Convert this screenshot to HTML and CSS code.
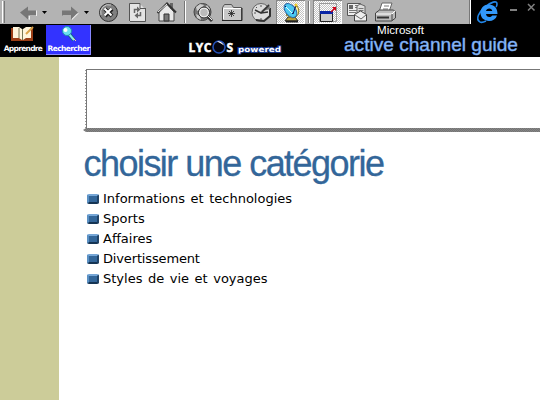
FILE: index.html
```html
<!DOCTYPE html>
<html lang="fr">
<head>
<meta charset="utf-8">
<title>Active Channel Guide</title>
<link rel="stylesheet" href="styles.css">
</head>
<body>
<header class="top">
<div class="chrome">
<div class="toolbar">
<svg width="14" height="24" viewBox="0 0 14 24"><path d="M2.500 1v22" stroke="#fff"/><path d="M4.500 1v22" stroke="#777"/></svg>
<svg width="26" height="24" viewBox="14 0 26 24"><path d="M21 14l8 5v-4h7v-5l1 1v5h-7v4z" fill="#eee"/><path d="M20 12.500l8-6v4h8v5h-8v4z" fill="#777"/></svg>
<svg width="16" height="24" viewBox="40 0 16 24"><path d="M42 11h5l-2.500 3z"/></svg>
<svg width="26" height="24" viewBox="56 0 26 24"><path d="M79 13l-7 7v-4h-9v-1h9z" fill="#eee"/><path d="M78 12.500l-7-6v4h-9v5h9v4z" fill="#777"/></svg>
<svg width="12" height="24" viewBox="82 0 12 24"><path d="M84 11h5l-2.500 3z"/></svg>
<svg width="30" height="24" viewBox="94 0 30 24"><circle cx="108.500" cy="12.500" r="9" fill="#808080" stroke="#333"/><path d="M101 15a8 8 0 0 1 10-10" fill="none" stroke="#ccc"/><path d="M105 9l7 7m0-7l-7 7" stroke="#222" stroke-width="4"/><path d="M104.500 8.500l7 7m0-7l-7 7" stroke="#fff" stroke-width="2"/></svg>
<svg width="28" height="24" viewBox="124 0 28 24"><path d="M130 4h10l5 5v12h-15z" fill="#e4e4e4"/><path d="M129.500 21V3.500H140M140 3.500v5h5M145.500 8v13.500H130" fill="none" stroke="#555"/><path d="M134.500 13V9.500H137M140.500 12v3.500H138" fill="none" stroke="#666" stroke-width="1.500"/><path d="M137 6.500l3.500 3-3.500 3zM138 12.500l-3.500 3 3.500 3z" fill="#666"/></svg>
<svg width="29" height="24" viewBox="152 0 29 24"><path d="M159 12v9h15v-9l-7-8z" fill="#e8e8e8" stroke="#444"/><path d="M170 3h3v6h-3z" fill="#666"/><path d="M157.500 13L167 3.500l9 9" fill="none" stroke="#333" stroke-width="2"/><path d="M158 12l9-8" stroke="#eee"/><path d="M164 14h5v7h-5z" fill="#777" stroke="#333"/></svg>
<svg width="8" height="24" viewBox="181 0 8 24"><path d="M184.500 1v22" stroke="#777"/><path d="M185.500 1v22" stroke="#fff"/></svg>
<svg width="29" height="24" viewBox="189 0 29 24"><circle cx="202.500" cy="12" r="8.500" fill="#777" stroke="#444"/><path d="M196 7l4-3 4 1-3 4-4 2zM207 5l3 4-2 2-3-3zM196 14l4 2 1 4-4-2z" fill="#ccc"/><circle cx="204" cy="12.500" r="4.500" fill="#bbb" stroke="#eee" stroke-width="1.500"/><circle cx="204" cy="12.500" r="5.500" fill="none" stroke="#333"/><path d="M208 17l4 4" stroke="#333" stroke-width="3"/><path d="M208 16l4 4" stroke="#eee"/></svg>
<svg width="29" height="24" viewBox="218 0 29 24"><path d="M222.500 20.500V7.500l2-3h7l2 3h8v13z" fill="#c8c8c8" stroke="#555"/><path d="M223.500 19V8.500H241" fill="none" stroke="#fff"/><path d="M222 20.500h20V8" fill="none" stroke="#222"/><path d="M231.500 10v7m-2.500-6l5 5m0-5l-5 5m-1-2.500h7" stroke="#222" stroke-width=".8"/></svg>
<svg width="29" height="24" viewBox="247 0 29 24"><circle cx="261" cy="12.500" r="9" fill="#ddd" stroke="#666"/><path d="M270 8v8l-6 5-8-1" fill="none" stroke="#333" stroke-width="2"/><path d="M260 12l9-8 1 5z" fill="#777"/><path d="M255 10l6 3 8-8M261 13l7-1" fill="none" stroke="#333" stroke-width="1.500"/><path d="M261 5v2m-7 6h2m5 5v2m-5-13l1 1" stroke="#555"/></svg>
<span class="pressed"><svg width="29" height="24" viewBox="276 0 29 24"><path d="M288 17l-3 4h13l-3-4z" fill="#bba23a" stroke="#333"/><path d="M297 6c4 5 1 12-5 12l-6-3z" fill="#fff0a0" stroke="#8b7818"/><ellipse cx="290.500" cy="10.500" rx="5" ry="8" transform="rotate(-40 290.500 10.500)" fill="#4bc9f2" stroke="#2464a8"/><path d="M285 6l8 8 3-9" fill="none" stroke="#115"/><path d="M286 7l6 6" stroke="#dff"/><circle cx="296" cy="5" r="1.500" fill="#f0ca28"/><path d="M286 21.500h12" stroke="#222" stroke-width="2"/></svg></span>
<svg width="8" height="24" viewBox="305 0 8 24"><path d="M308.500 1v22" stroke="#777"/><path d="M309.500 1v22" stroke="#fff"/></svg>
<span class="pressed"><svg width="29" height="24" viewBox="313 0 29 24"><path d="M319.500 3.500h17v18h-17z" fill="none" stroke="#999"/><path d="M320.500 11.500h12v10h-12z" fill="#ccc" stroke="#222"/><path d="M320 11h13v3h-13z" fill="#0824a5"/><path d="M331 12l4-4" stroke="#d00016" stroke-width="1.500"/><path d="M332 7h4v4z" fill="#d00016"/></svg></span>
<svg width="29" height="24" viewBox="342 0 29 24"><path d="M347.500 3.500h13v12h-13z" fill="#eee" stroke="#555"/><path d="M349 5h4v4h-4z" fill="#666"/><path d="M355 5.500h4m-4 2h4m-10 3h10m-10 2h7" stroke="#777"/><path d="M360 4l5 2v10h-8V6z" fill="#ddd" stroke="#666"/><path d="M358.500 8.500h5m-5 2h5" stroke="#777"/><path d="M354.500 14.500l6-3.500 6 3.500v6.500h-12z" fill="#eee" stroke="#444"/><path d="M355 15l6 4 5-4" fill="none" stroke="#666"/></svg>
<svg width="29" height="24" viewBox="371 0 29 24"><path d="M379 12l3-9h10l-3 9z" fill="#fff" stroke="#666"/><path d="M384 6h5m-6 3h5" stroke="#777"/><path d="M375.500 13l4-3h14l2 2v6l-4 3h-16z" fill="#bbb" stroke="#444"/><path d="M376 14h16l3-3" fill="none" stroke="#fff"/><path d="M377 17.500h12" stroke="#333" stroke-width="2"/><path d="M392 14v7" stroke="#444"/></svg>
</div>
<svg width="69" height="24" viewBox="471 0 69 24"><path d="M480 22c-5-3-1-10 5-15 6-5 12-7 12-3 0 1 0 2-1 3" fill="none" stroke="#2286e8" stroke-width="1.600"/><path d="M480 22c2 1 4 0 6-1" fill="none" stroke="#2286e8" stroke-width="1.600"/><path fill-rule="evenodd" d="M489 4.500c5 0 8.500 3.500 8.500 9.500H486c.2 2 1.500 3 3.300 3 1.500 0 2.500-.6 3-1.500h4.700c-1.200 3.600-4 5.500-8 5.500-5 0-8.500-3.400-8.500-8.200s3.500-8.300 8.500-8.300zM486 11h6.300c-.3-1.600-1.400-2.500-3.100-2.500s-2.800.9-3.200 2.500z" fill="#3298fa"/><path d="M510 10h7" stroke="#808080" stroke-width="2"/><path d="M528 4l6.500 6.500m0-6.500l-6.500 6.500" stroke="#808080" stroke-width="1.500"/></svg>
</div>
<div class="brand">
<a class="tab"><svg width="46" height="17" viewBox="0 25 46 17"><path d="M11 28v13h22V28l-9 1-2 1-3-2z" fill="#9b3e16"/><path d="M13 27l6 0 3 2v11l-3-2h-6zM23 29l3-2h5v11h-5l-3 2z" fill="#fff5dc"/><path d="M22.500 29v11M19 28v10" stroke="#775"/><path d="M26 34l7-7" stroke="#dca34a" stroke-width="2"/></svg><span>Apprendre</span></a>
<a class="tab active"><svg width="45" height="17" viewBox="46 25 45 17"><path d="M69 34l5 6" stroke="#185c83" stroke-width="4"/><path d="M69 34l5 6" stroke="#83edef" stroke-width="2"/><circle cx="67" cy="31" r="4.500" fill="#6bdff0" stroke="#208eb3"/><circle cx="65.500" cy="30" r="2" fill="#fff"/><path d="M73 38l3 3" stroke="#ec9"/></svg><span>Rechercher</span></a>
<svg class="lycos" width="110" height="33" viewBox="180 24 110 33"><text class="ly" x="188.500" y="51.500" textLength="23">LYC</text><circle cx="219" cy="47" r="6" fill="#050510" stroke="#2450b8" stroke-width="1.600"/><path d="M217 41.500a6 6 0 0 1 7 4l-3-2z" fill="#fff"/><text class="ly" x="226.500" y="51.500" textLength="8">S</text><text class="pow" x="238" y="52" textLength="43" lengthAdjust="spacingAndGlyphs">powered</text></svg>
<svg class="guide" width="190" height="33" viewBox="340 24 190 33"><text class="ms" x="377" y="33.800" textLength="47" lengthAdjust="spacingAndGlyphs">Microsoft</text><text class="acg" x="344" y="50.500" textLength="174" lengthAdjust="spacingAndGlyphs">active channel guide</text></svg>
</div>
</header>
<main class="page">
<aside class="side"></aside>
<section class="content">
<svg class="banner" width="457" height="64" viewBox="83 68 457 64"><defs><pattern id="grain" width="2" height="2" patternUnits="userSpaceOnUse"><path d="M0 0h2v2H0z" fill="#858585"/><path d="M0 0h1v1H0zM1 1h1v1H1z" fill="#747474"/></pattern></defs><path d="M86 69.500h454M86.500 69v60" stroke="#777"/><path d="M85.500 70v59" stroke="#999" stroke-dasharray="1 2"/><path d="M86 128h454v4H86l-3-2z" fill="url(#grain)"/></svg>
<h1><svg width="310" height="47" viewBox="80 142 310 47"><text x="83.500" y="175.700" textLength="301.500">choisir une catégorie</text></svg></h1>
<ul class="cats">
<li><i></i><span>Informations et technologies</span></li>
<li><i></i><span>Sports</span></li>
<li><i></i><span>Affaires</span></li>
<li><i></i><span class="tight">Divertissement</span></li>
<li><i></i><span>Styles de vie et voyages</span></li>
</ul>
</section>
</main>
</body>
</html>
```
FILE: styles.css
```css
* { box-sizing: border-box; }
body { margin: 0; width: 540px; height: 400px; overflow: hidden; background: #fff; display: flex; flex-direction: column; }
svg { display: block; flex: none; }
.top { height: 57px; background: #000; }
.chrome { display: flex; height: 24px; }
.toolbar { display: flex; width: 471px; height: 24px; background: #b3b3b3; border-right: 1px solid #fff; box-shadow: inset -1px 0 #777; }
.pressed { width: 29px; height: 24px; box-shadow: inset 1px 1px #888, inset -1px -1px #fff; background: repeating-conic-gradient(#fff 0 25%, #c4c4c4 0 50%) 0 0 / 2px 2px; }
.brand { display: flex; height: 33px; }
.tab { width: 46px; height: 31px; padding-top: 1px; font: bold 8px/11px "DejaVu Sans", sans-serif; color: #fff; text-align: center; overflow: hidden; }
.tab span { display: block; letter-spacing: -0.7px; font-size: 7.5px; margin-top: 1px; white-space: nowrap; }
.active { width: 45px; background: #3333ff; box-shadow: inset -1px -1px #8888ff; margin-top: 1px; height: 30px; padding-top: 0; }
.active span { letter-spacing: -0.6px; }
.lycos { margin-left: 89px; }
.ly { font: bold 12px "Open Sans", sans-serif; fill: #fff; stroke: #fff; stroke-width: 0.5px; }
.pow { font: bold 7.5px "DejaVu Sans", sans-serif; fill: #fff; stroke: #12328a; stroke-width: 2px; paint-order: stroke; }
.guide { margin-left: 50px; }
.ms { font: 10.5px "Liberation Sans", sans-serif; fill: #fff; }
.acg { font: 19px "Liberation Sans", sans-serif; fill: #91bff8; stroke: #6b9ce8; stroke-width: 0.5px; }
.page { display: flex; flex: 1; }
.side { width: 59px; background: #cccc99; }
.content { padding: 11px 0 0 24px; }
h1 { margin: 10px 0 0 -3px; font: 36px "Liberation Sans", sans-serif; }
h1 text { fill: #336699; stroke: #336699; stroke-width: 0.3px; }
.cats { list-style: none; margin: 0; padding: 0 0 0 4px; font: 13px/20px "DejaVu Sans", Verdana, sans-serif; color: #000; word-spacing: 1.4px; }
.cats li { display: flex; align-items: center; height: 20px; gap: 4px; white-space: nowrap; }
.tight { letter-spacing: -0.15px; }
.cats i { width: 12px; height: 10px; margin-top: -1px; border: 2px solid; border-color: #76a6d6 #204367 #153453 #5b91c5; border-radius: 2px; background: #336699; }
```
